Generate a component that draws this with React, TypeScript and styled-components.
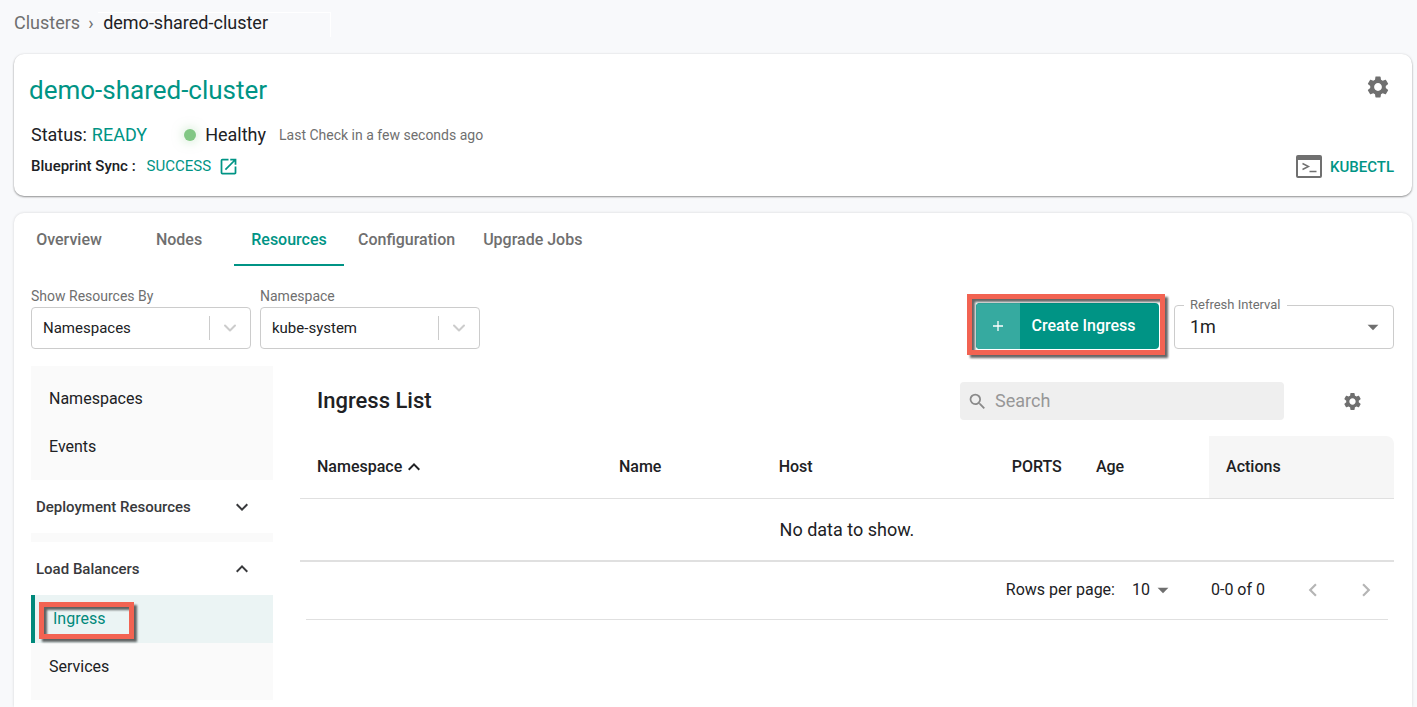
import React from "react";
import styled, { createGlobalStyle, css } from "styled-components";
import {
  MdArrowDropDown,
  MdChevronLeft,
  MdChevronRight,
  MdExpandLess,
  MdExpandMore,
  MdOpenInNew,
  MdSearch,
  MdSettings,
} from "react-icons/md";

const teal = "#009485";
const ink = "#202124";
const grey = "#6f6f6f";
const line = "#e0e0e0";

const GlobalStyle = createGlobalStyle`
  *, *::before, *::after { box-sizing: border-box; }
  body {
    margin: 0;
    background: #f8f9fb;
    color: ${ink};
    font-family: Roboto, "Liberation Sans", sans-serif;
    font-size: 16px;
    line-height: 20px;
  }
  button, select, input { font: inherit; color: inherit; }
  button { border: 0; padding: 0; background: none; cursor: pointer; }
  a { text-decoration: none; color: inherit; }
  h1, h2 { margin: 0; font-weight: 500; }
  svg { display: block; flex: none; }
`;

const Page = styled.div`
  display: flex;
  flex-direction: column;
  min-height: 100vh;
  padding: 0 5px 0 14px;
`;

const Breadcrumb = styled.nav`
  display: flex;
  align-items: center;
  height: 54px;
  padding-bottom: 8px;
  font-size: 18px;
  color: ${grey};
`;

const CrumbSeparator = styled.span`
  width: 18px;
  padding-left: 8px;
`;

const CurrentCrumb = styled.span`
  width: 233px;
  height: 25px;
  margin-top: 3px;
  padding-left: 5px;
  border-top: 1px solid #fff;
  border-right: 1px solid #fff;
  color: ${ink};
`;

const SummaryCard = styled.header`
  display: flex;
  justify-content: space-between;
  height: 142px;
  padding: 20px 18px 16px 17px;
  border-radius: 10px;
  background: #fff;
  box-shadow: 0 1px 2px rgba(0, 0, 0, 0.4), 0 0 3px rgba(0, 0, 0, 0.08);
`;

const SummaryInfo = styled.div`
  display: flex;
  flex-direction: column;
`;

const ClusterName = styled.h1`
  margin-left: -2px;
  font-size: 26px;
  font-weight: 400;
  line-height: 32px;
  color: ${teal};
`;

const StatusRow = styled.div`
  display: flex;
  align-items: center;
  height: 24px;
  margin-top: 17px;
  font-size: 18px;
`;

const Accent = styled.span`
  margin-left: 5px;
  color: ${teal};
`;

const HealthDot = styled.span`
  width: 12px;
  height: 12px;
  margin: 0 9px 0 37px;
  border-radius: 50%;
  background: #81c784;
  box-shadow: 0 0 12px rgba(129, 199, 132, 0.5);
`;

const CheckedAt = styled.span`
  margin-left: 13px;
  font-size: 14px;
  color: ${grey};
`;

const SyncRow = styled.div`
  display: flex;
  align-items: center;
  height: 24px;
  margin-top: 7px;
  font-size: 15px;
  font-weight: 500;
`;

const SyncLink = styled.a`
  display: flex;
  align-items: center;
  gap: 7px;
  margin-left: 11px;
  font-weight: 400;
  color: ${teal};
`;

const SummaryActions = styled.div`
  display: flex;
  flex-direction: column;
  align-items: flex-end;
  justify-content: space-between;
`;

const IconButton = styled.button<{ $inset?: number }>`
  display: flex;
  margin-right: ${(p) => p.$inset ?? 0}px;
  color: ${grey};
`;

const KubectlButton = styled.button`
  display: flex;
  align-items: center;
  gap: 8px;
  margin-bottom: 2px;
  font-size: 15px;
  font-weight: 500;
  color: ${teal};
`;

const ResourceCard = styled.main`
  flex: 1;
  margin-top: 17px;
  padding-bottom: 6px;
  border-radius: 10px 10px 0 0;
  background: #fff;
  box-shadow: 0 0 3px rgba(0, 0, 0, 0.15);
`;

const Tabs = styled.div`
  display: flex;
`;

const Tab = styled.button<{ $active?: boolean }>`
  min-width: 110px;
  height: 53px;
  padding: 2px 14px 0;
  border-bottom: 2px solid ${(p) => (p.$active ? teal : "transparent")};
  font-weight: 500;
  color: ${(p) => (p.$active ? teal : grey)};
`;

const Filters = styled.div`
  display: flex;
  align-items: flex-end;
  gap: 9px;
  padding: 20px 18px 0 17px;
`;

const Field = styled.div`
  width: 220px;
`;

const FieldLabel = styled.label`
  display: block;
  height: 21px;
  font-size: 14px;
  color: ${grey};
`;

const SelectBox = styled.div`
  display: grid;
  align-items: center;
  height: 42px;
  border: 1px solid #ccc;
  border-radius: 4px;
  background: #fff;

  > * {
    grid-area: 1 / 1;
  }
`;

const Select = styled.select`
  appearance: none;
  width: 100%;
  height: 100%;
  padding: 0 0 0 11px;
  border: 0;
  background: transparent;
  font-size: 15px;
`;

const Indicator = styled.span`
  justify-self: end;
  display: flex;
  align-items: center;
  height: 24px;
  padding: 0 10px;
  border-left: 1px solid #ccc;
  color: #ccc;
  pointer-events: none;
`;

const HighlightFrame = styled.span<{ $inset: string }>`
  position: absolute;
  inset: ${(p) => p.$inset};
  border: 5px solid #f26352;
  filter: drop-shadow(3px 3px 1px rgba(0, 0, 0, 0.6));
  pointer-events: none;
`;

const CreateArea = styled.div`
  position: relative;
  display: flex;
  margin-left: auto;
  margin-right: 6px;
`;

const CreateButton = styled.button`
  display: flex;
  height: 46px;
  border-radius: 4px;
  overflow: hidden;
  background: ${teal};
  color: #fff;
  font-weight: 500;
  line-height: 46px;
`;

const CreateIcon = styled.span`
  display: flex;
  align-items: center;
  justify-content: center;
  width: 44px;
  height: 46px;
  background: #36aaa0;
`;

const CreateText = styled.span`
  width: 139px;
  padding-right: 12px;
`;

const RefreshField = styled.div`
  position: relative;
  width: 220px;
`;

const RefreshLabel = styled.label`
  position: absolute;
  top: -10px;
  left: 10px;
  padding: 0 6px;
  background: #fff;
  font-size: 13px;
  color: ${grey};
`;

const RefreshSelect = styled(Select)`
  padding-left: 15px;
  font-size: 18px;
`;

const RefreshBox = styled(SelectBox)`
  height: 44px;
`;

const Caret = styled.span`
  justify-self: end;
  padding-right: 7px;
  color: ${grey};
  pointer-events: none;
`;

const Content = styled.div`
  display: flex;
  gap: 27px;
  margin-top: 17px;
  padding: 0 18px 0 17px;
`;

const Sidebar = styled.nav`
  flex: none;
  width: 242px;
`;

const NavGroup = styled.div<{ $top?: number }>`
  padding: ${(p) => p.$top ?? 0}px 0 9px;
  background: #fafafa;
`;

const NavItem = styled.a<{ $active?: boolean }>`
  position: relative;
  display: flex;
  align-items: center;
  height: 48px;
  padding-left: 18px;
  ${(p) =>
    p.$active &&
    css`
      border-left: 4px solid #00897b;
      background: #ebf4f4;
      color: #00897b;
    `}
`;

const NavHeader = styled.button`
  display: flex;
  align-items: center;
  justify-content: space-between;
  width: 100%;
  height: 53px;
  padding: 0 19px 0 5px;
  font-size: 15px;
  font-weight: 500;
  color: #38393c;
`;

const Panel = styled.section`
  flex: 1;
  min-width: 0;
`;

const PanelHeader = styled.div`
  display: flex;
  align-items: center;
  height: 70px;
  padding-left: 17px;
`;

const PanelTitle = styled.h2`
  font-size: 22px;
  line-height: 28px;
`;

const SearchBox = styled.label`
  display: flex;
  align-items: center;
  gap: 7px;
  width: 324px;
  height: 38px;
  margin: 0 58px 0 auto;
  padding-left: 7px;
  border-radius: 4px;
  background: #efefef;
  color: #8a8a8a;
`;

const SearchInput = styled.input`
  flex: 1;
  min-width: 0;
  border: 0;
  padding: 0;
  outline: 0;
  background: transparent;
  color: ${ink};
  font-size: 18px;
  line-height: 24px;

  &::placeholder {
    color: #979797;
    opacity: 1;
  }
`;

const Table = styled.table`
  width: 100%;
  table-layout: fixed;
  border-spacing: 0;
`;

const HeadCell = styled.th<{ $width: string; $shaded?: boolean }>`
  width: ${(p) => p.$width};
  height: 63px;
  padding: 0 0 0 17px;
  border-bottom: 1px solid ${line};
  border-radius: ${(p) => (p.$shaded ? "0 8px 0 0" : "0")};
  background: ${(p) => (p.$shaded ? "#f6f6f6" : "transparent")};
  font-weight: 500;
  text-align: left;
`;

const SortButton = styled.button`
  display: flex;
  align-items: center;
  font-weight: 500;
`;

const EmptyCell = styled.td`
  height: 63px;
  padding: 0;
  border-bottom: 2px solid ${line};
  font-size: 18px;
  text-align: center;
`;

const Pagination = styled.div`
  display: flex;
  align-items: center;
  justify-content: flex-end;
  height: 58px;
  margin: 0 6px;
  padding-bottom: 2px;
  border-bottom: 1px solid ${line};
`;

const PageSizeBox = styled.div`
  display: grid;
  align-items: center;
  width: 44px;
  margin: 0 35px 0 17px;

  > * {
    grid-area: 1 / 1;
  }
`;

const PageSize = styled(Select)`
  padding: 0;
  font-size: 16px;
`;

const PageCaret = styled.span`
  justify-self: end;
  color: ${grey};
  pointer-events: none;
`;

const PageButton = styled.button<{ $gap: number }>`
  margin-left: ${(p) => p.$gap}px;
  color: #b5b5b5;
`;

const PagerEnd = styled.div`
  display: flex;
  padding-right: 9px;
`;

function TerminalIcon() {
  return (
    <svg width="26" height="23" viewBox="0 0 26 23" fill="none" aria-hidden="true">
      <rect x="1" y="1" width="24" height="21" rx="1" stroke="#707070" strokeWidth="2" />
      <path d="M1 1h24v4H1z" fill="#707070" />
      <path d="M6.500 8.500l6 3-6 3M13.500 16.500h7" stroke="#707070" strokeWidth="1.400" />
    </svg>
  );
}

function SelectChevron() {
  return (
    <svg width="20" height="20" viewBox="0 0 20 20" fill="none" aria-hidden="true">
      <path
        d="M5 7.500l5 5 5-5"
        stroke="currentColor"
        strokeWidth="2"
        strokeLinecap="round"
        strokeLinejoin="round"
      />
    </svg>
  );
}

function PlusIcon() {
  return (
    <svg width="10" height="10" viewBox="0 0 10 10" aria-hidden="true">
      <path d="M5 0v10M0 5h10" stroke="#fff" strokeWidth="1.300" />
    </svg>
  );
}

const tabs = ["Overview", "Nodes", "Resources", "Configuration", "Upgrade Jobs"];

const columns = [
  { title: "Name", width: "14.6%" },
  { title: "Host", width: "21.3%" },
  { title: "PORTS", width: "7.7%" },
  { title: "Age", width: "11.9%" },
];

function FilterSelect({ id, label, value }: { id: string; label: string; value: string }) {
  return (
    <Field>
      <FieldLabel htmlFor={id}>{label}</FieldLabel>
      <SelectBox>
        <Select id={id} defaultValue={value}>
          <option>{value}</option>
        </Select>
        <Indicator>
          <SelectChevron />
        </Indicator>
      </SelectBox>
    </Field>
  );
}

export default function App() {
  return (
    <>
      <GlobalStyle />
      <Page>
        <Breadcrumb aria-label="Breadcrumb">
          <a href="#clusters">Clusters</a>
          <CrumbSeparator>›</CrumbSeparator>
          <CurrentCrumb>demo-shared-cluster</CurrentCrumb>
        </Breadcrumb>

        <SummaryCard>
          <SummaryInfo>
            <ClusterName>demo-shared-cluster</ClusterName>
            <StatusRow>
              Status: <Accent>READY</Accent>
              <HealthDot />
              Healthy
              <CheckedAt>Last Check in a few seconds ago</CheckedAt>
            </StatusRow>
            <SyncRow>
              Blueprint Sync :
              <SyncLink href="#sync">
                SUCCESS
                <MdOpenInNew size={21} />
              </SyncLink>
            </SyncRow>
          </SummaryInfo>
          <SummaryActions>
            <IconButton aria-label="Cluster settings" $inset={3}>
              <MdSettings size={26} />
            </IconButton>
            <KubectlButton>
              <TerminalIcon />
              KUBECTL
            </KubectlButton>
          </SummaryActions>
        </SummaryCard>

        <ResourceCard>
          <Tabs role="tablist">
            {tabs.map((name) => (
              <Tab key={name} role="tab" aria-selected={name === "Resources"} $active={name === "Resources"}>
                {name}
              </Tab>
            ))}
          </Tabs>

          <Filters>
            <FilterSelect id="show-by" label="Show Resources By" value="Namespaces" />
            <FilterSelect id="namespace" label="Namespace" value="kube-system" />
            <CreateArea>
              <CreateButton>
                <CreateIcon>
                  <PlusIcon />
                </CreateIcon>
                <CreateText>Create Ingress</CreateText>
              </CreateButton>
              <HighlightFrame $inset="-9px -6px -6px -9px" />
            </CreateArea>
            <RefreshField>
              <RefreshBox>
                <RefreshSelect id="refresh" defaultValue="1m">
                  <option>1m</option>
                </RefreshSelect>
                <Caret>
                  <MdArrowDropDown size={26} />
                </Caret>
              </RefreshBox>
              <RefreshLabel htmlFor="refresh">Refresh Interval</RefreshLabel>
            </RefreshField>
          </Filters>

          <Content>
            <Sidebar aria-label="Resources">
              <NavGroup $top={9}>
                <NavItem href="#namespaces">Namespaces</NavItem>
                <NavItem href="#events">Events</NavItem>
              </NavGroup>
              <NavHeader aria-expanded={false}>
                Deployment Resources
                <MdExpandMore size={24} />
              </NavHeader>
              <NavGroup />
              <NavHeader aria-expanded={true}>
                Load Balancers
                <MdExpandLess size={24} />
              </NavHeader>
              <NavGroup>
                <NavItem href="#ingress" $active>
                  Ingress
                  <HighlightFrame $inset="7px 139px 4px 4px" />
                </NavItem>
                <NavItem href="#services">Services</NavItem>
              </NavGroup>
            </Sidebar>

            <Panel>
              <PanelHeader>
                <PanelTitle>Ingress List</PanelTitle>
                <SearchBox>
                  <MdSearch size={21} />
                  <SearchInput type="text" placeholder="Search" aria-label="Search" />
                </SearchBox>
                <IconButton aria-label="Table settings" $inset={31}>
                  <MdSettings size={21} />
                </IconButton>
              </PanelHeader>
              <Table>
                <thead>
                  <tr>
                    <HeadCell $width="27.6%">
                      <SortButton>
                        Namespace
                        <MdExpandLess size={24} />
                      </SortButton>
                    </HeadCell>
                    {columns.map((column) => (
                      <HeadCell key={column.title} $width={column.width}>
                        {column.title}
                      </HeadCell>
                    ))}
                    <HeadCell $width="16.9%" $shaded>
                      Actions
                    </HeadCell>
                  </tr>
                </thead>
                <tbody>
                  <tr>
                    <EmptyCell colSpan={6}>No data to show.</EmptyCell>
                  </tr>
                </tbody>
              </Table>
              <Pagination>
                <label htmlFor="page-size">Rows per page:</label>
                <PageSizeBox>
                  <PageSize id="page-size" defaultValue="10">
                    <option>10</option>
                  </PageSize>
                  <PageCaret>
                    <MdArrowDropDown size={26} />
                  </PageCaret>
                </PageSizeBox>
                <span>0-0 of 0</span>
                <PagerEnd>
                  <PageButton aria-label="Previous page" $gap={35}>
                    <MdChevronLeft size={26} />
                  </PageButton>
                  <PageButton aria-label="Next page" $gap={27}>
                    <MdChevronRight size={26} />
                  </PageButton>
                </PagerEnd>
              </Pagination>
            </Panel>
          </Content>
        </ResourceCard>
      </Page>
    </>
  );
}
